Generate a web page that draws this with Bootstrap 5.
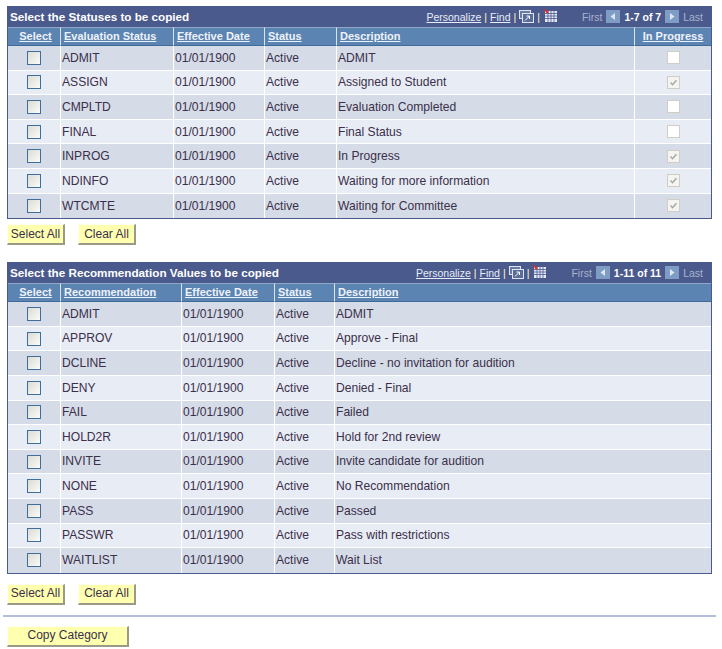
<!DOCTYPE html>
<html lang="en">
<head>
<meta charset="utf-8">
<title>Copy Category</title>
<link href="https://cdn.jsdelivr.net/npm/bootstrap@5.3.0/dist/css/bootstrap.min.css" rel="stylesheet">
<style>
body{font-family:"Liberation Sans",Arial,sans-serif;font-size:12px;color:#3b2f4a;background:#fff;}
.ps-page{padding:6px 6px 0 7px;width:722px;}
.ps-grid{width:705px;border:1px solid #4a5a8c;}
.ps-title{background:#4a5a8c;height:20px;padding:0 8px 0 2px;color:#fff;}
.ps-title b{font-size:11.7px;line-height:20px;}
.ps-tools{font-size:10.5px;color:#fff;line-height:21px;white-space:nowrap;}
.ps-tools a{color:#e8ecf8;}
.ps-tools b{font-size:10.5px;line-height:21px;}
.ps-sep{margin:0 3px;color:#fff6c8;}
.ps-dim{color:#a9b3cf;}
.ps-first{margin-left:25px;}
.ps-table{table-layout:fixed;width:703px;margin:0;border-collapse:separate;border-spacing:0;}
.ps-table th{background:#5b84b2;height:19px;padding:0 0 0 3px;font-size:11px;font-weight:700;border-top:1px solid #8fa9c9;border-left:1px solid #dbe3ef;border-bottom:1px solid #3e6a9c;line-height:15px;white-space:nowrap;}
.ps-table th:first-child{border-left:0;text-align:center;}
.ps-table th a{color:#eef2f9;}
.ps-table td{height:24.6px;padding:0 0 0 1px;font-size:12.1px;color:#3b2f4a;border-left:1px solid #fff;border-bottom:1px solid #fff;vertical-align:middle;background:#d5dce8;white-space:nowrap;}
.ps-table tr:nth-child(even) td{background:#e8ecf5;}
.ps-table tr:last-child td{border-bottom:0;}
.ps-table td:first-child{border-left:0;text-align:center;padding:0;}
.ps-table td.ps-mid,.ps-table th.ps-mid{text-align:center;padding:0;}
.ps-box{appearance:none;-webkit-appearance:none;display:block;margin:0 auto;width:14px;height:14px;border:1.5px solid #3d6e9c;background:linear-gradient(135deg,#dcdcd4,#fbfbf8);}
.ps-box.ps-off{width:13px;height:13px;border:1px solid #cfcdc4;background:#fff;}
.ps-box.ps-off:checked{background:#f4f4f0 url("data:image/svg+xml,%3Csvg xmlns='http://www.w3.org/2000/svg' viewBox='0 0 13 13'%3E%3Cpath d='M3 6.5l2.4 2.6L10 3.8' fill='none' stroke='%23a8a8a0' stroke-width='1.7'/%3E%3C/svg%3E") center/contain no-repeat;}
.ps-actions{gap:13px;margin-top:5px;}
.ps-actions-low{margin-top:10px;}
.ps-btn{background:#ffffb0;color:#3b2f4a;font-family:inherit;font-size:12px;height:21px;width:58px;padding:0;border-radius:0;border:1px solid #fffff0;border-right:2px solid #9a9a88;border-bottom:2px solid #9a9a88;line-height:17px;}
.ps-btn:hover{background:#ffffb0;color:#3b2f4a;border-color:#fffff0 #9a9a88 #9a9a88 #fffff0;}
.ps-wide{width:122px;}
.ps-second{margin-top:17px;}
.ps-rule{border:0;border-top:2px solid #b3bfd8;opacity:1;margin:10px 0 9px -4px;width:713px;}
.ps-ico{vertical-align:-2px;}
.ps-nav{vertical-align:-2px;margin:0 4px;}
.c-sel{width:52px}.c-ev{width:113px}.c-dt1{width:91px}.c-st1{width:72px}.c-ds1{width:298px}.c-ip{width:77px}
.c-rec{width:121px}.c-dt2{width:93px}.c-st2{width:60px}.c-ds2{width:377px}
</style>
</head>
<body>
<div class="ps-page">

<div class="ps-grid">
  <div class="ps-title d-flex justify-content-between">
    <b>Select the Statuses to be copied</b>
    <div class="ps-tools"><a href="#">Personalize</a><span class="ps-sep">|</span><a href="#">Find</a><span class="ps-sep">|</span><svg class="ps-ico" width="15" height="13" viewBox="0 0 15 13"><rect x=".5" y=".5" width="11" height="8" fill="#6a7ca6" stroke="#dfe5f2"/><rect x="3.500" y="3.500" width="11" height="9" fill="#5a6c98" stroke="#dfe5f2"/><path d="M6 10.500l4.500-4.500M7.500 6h3v3" fill="none" stroke="#fff"/></svg><span class="ps-sep">|</span><svg class="ps-ico" width="14" height="15" viewBox="0 0 14 15"><rect x="2" y="3" width="12" height="11" fill="#e4e8fa"/><path d="M2 5.500h12M2 8h12M2 10.500h12M5 3v11M8 3v11M11 3v11" stroke="#4a5a8c" stroke-width=".8"/><path d="M0 0l6 4-2 2z" fill="#e0302a"/></svg><span class="ps-dim ps-first">First</span><svg class="ps-nav" width="14" height="13" viewBox="0 0 14 13"><rect width="14" height="13" fill="#7f9cc4"/><path d="M9 3v7L4.500 6.500z" fill="#dfe6f2"/></svg><b>1-7 of 7</b><svg class="ps-nav" width="14" height="13" viewBox="0 0 14 13"><rect width="14" height="13" fill="#7f9cc4"/><path d="M5 3v7L9.500 6.500z" fill="#dfe6f2"/></svg><span class="ps-dim">Last</span></div>
  </div>
  <table class="ps-table">
    <colgroup><col class="c-sel"><col class="c-ev"><col class="c-dt1"><col class="c-st1"><col class="c-ds1"><col class="c-ip"></colgroup>
    <thead><tr><th><a href="#">Select</a></th><th><a href="#">Evaluation Status</a></th><th><a href="#">Effective Date</a></th><th><a href="#">Status</a></th><th><a href="#">Description</a></th><th class="ps-mid"><a href="#">In Progress</a></th></tr></thead>
    <tbody>
      <tr><td><input class="ps-box" type="checkbox" aria-label="Select ADMIT"></td><td>ADMIT</td><td>01/01/1900</td><td>Active</td><td>ADMIT</td><td class="ps-mid"><input class="ps-box ps-off" type="checkbox" disabled aria-label="In progress"></td></tr>
      <tr><td><input class="ps-box" type="checkbox" aria-label="Select ASSIGN"></td><td>ASSIGN</td><td>01/01/1900</td><td>Active</td><td>Assigned to Student</td><td class="ps-mid"><input class="ps-box ps-off" type="checkbox" checked disabled aria-label="In progress"></td></tr>
      <tr><td><input class="ps-box" type="checkbox" aria-label="Select CMPLTD"></td><td>CMPLTD</td><td>01/01/1900</td><td>Active</td><td>Evaluation Completed</td><td class="ps-mid"><input class="ps-box ps-off" type="checkbox" disabled aria-label="In progress"></td></tr>
      <tr><td><input class="ps-box" type="checkbox" aria-label="Select FINAL"></td><td>FINAL</td><td>01/01/1900</td><td>Active</td><td>Final Status</td><td class="ps-mid"><input class="ps-box ps-off" type="checkbox" disabled aria-label="In progress"></td></tr>
      <tr><td><input class="ps-box" type="checkbox" aria-label="Select INPROG"></td><td>INPROG</td><td>01/01/1900</td><td>Active</td><td>In Progress</td><td class="ps-mid"><input class="ps-box ps-off" type="checkbox" checked disabled aria-label="In progress"></td></tr>
      <tr><td><input class="ps-box" type="checkbox" aria-label="Select NDINFO"></td><td>NDINFO</td><td>01/01/1900</td><td>Active</td><td>Waiting for more information</td><td class="ps-mid"><input class="ps-box ps-off" type="checkbox" checked disabled aria-label="In progress"></td></tr>
      <tr><td><input class="ps-box" type="checkbox" aria-label="Select WTCMTE"></td><td>WTCMTE</td><td>01/01/1900</td><td>Active</td><td>Waiting for Committee</td><td class="ps-mid"><input class="ps-box ps-off" type="checkbox" checked disabled aria-label="In progress"></td></tr>
    </tbody>
  </table>
</div>
<div class="d-flex ps-actions"><button type="button" class="btn ps-btn">Select All</button><button type="button" class="btn ps-btn">Clear All</button></div>

<div class="ps-grid ps-second">
  <div class="ps-title d-flex justify-content-between">
    <b>Select the Recommendation Values to be copied</b>
    <div class="ps-tools"><a href="#">Personalize</a><span class="ps-sep">|</span><a href="#">Find</a><span class="ps-sep">|</span><svg class="ps-ico" width="15" height="13" viewBox="0 0 15 13"><rect x=".5" y=".5" width="11" height="8" fill="#6a7ca6" stroke="#dfe5f2"/><rect x="3.500" y="3.500" width="11" height="9" fill="#5a6c98" stroke="#dfe5f2"/><path d="M6 10.500l4.500-4.500M7.500 6h3v3" fill="none" stroke="#fff"/></svg><span class="ps-sep">|</span><svg class="ps-ico" width="14" height="15" viewBox="0 0 14 15"><rect x="2" y="3" width="12" height="11" fill="#e4e8fa"/><path d="M2 5.500h12M2 8h12M2 10.500h12M5 3v11M8 3v11M11 3v11" stroke="#4a5a8c" stroke-width=".8"/><path d="M0 0l6 4-2 2z" fill="#e0302a"/></svg><span class="ps-dim ps-first">First</span><svg class="ps-nav" width="14" height="13" viewBox="0 0 14 13"><rect width="14" height="13" fill="#7f9cc4"/><path d="M9 3v7L4.500 6.500z" fill="#dfe6f2"/></svg><b>1-11 of 11</b><svg class="ps-nav" width="14" height="13" viewBox="0 0 14 13"><rect width="14" height="13" fill="#7f9cc4"/><path d="M5 3v7L9.500 6.500z" fill="#dfe6f2"/></svg><span class="ps-dim">Last</span></div>
  </div>
  <table class="ps-table">
    <colgroup><col class="c-sel"><col class="c-rec"><col class="c-dt2"><col class="c-st2"><col class="c-ds2"></colgroup>
    <thead><tr><th><a href="#">Select</a></th><th><a href="#">Recommendation</a></th><th><a href="#">Effective Date</a></th><th><a href="#">Status</a></th><th><a href="#">Description</a></th></tr></thead>
    <tbody>
      <tr><td><input class="ps-box" type="checkbox" aria-label="Select ADMIT"></td><td>ADMIT</td><td>01/01/1900</td><td>Active</td><td>ADMIT</td></tr>
      <tr><td><input class="ps-box" type="checkbox" aria-label="Select APPROV"></td><td>APPROV</td><td>01/01/1900</td><td>Active</td><td>Approve - Final</td></tr>
      <tr><td><input class="ps-box" type="checkbox" aria-label="Select DCLINE"></td><td>DCLINE</td><td>01/01/1900</td><td>Active</td><td>Decline - no invitation for audition</td></tr>
      <tr><td><input class="ps-box" type="checkbox" aria-label="Select DENY"></td><td>DENY</td><td>01/01/1900</td><td>Active</td><td>Denied - Final</td></tr>
      <tr><td><input class="ps-box" type="checkbox" aria-label="Select FAIL"></td><td>FAIL</td><td>01/01/1900</td><td>Active</td><td>Failed</td></tr>
      <tr><td><input class="ps-box" type="checkbox" aria-label="Select HOLD2R"></td><td>HOLD2R</td><td>01/01/1900</td><td>Active</td><td>Hold for 2nd review</td></tr>
      <tr><td><input class="ps-box" type="checkbox" aria-label="Select INVITE"></td><td>INVITE</td><td>01/01/1900</td><td>Active</td><td>Invite candidate for audition</td></tr>
      <tr><td><input class="ps-box" type="checkbox" aria-label="Select NONE"></td><td>NONE</td><td>01/01/1900</td><td>Active</td><td>No Recommendation</td></tr>
      <tr><td><input class="ps-box" type="checkbox" aria-label="Select PASS"></td><td>PASS</td><td>01/01/1900</td><td>Active</td><td>Passed</td></tr>
      <tr><td><input class="ps-box" type="checkbox" aria-label="Select PASSWR"></td><td>PASSWR</td><td>01/01/1900</td><td>Active</td><td>Pass with restrictions</td></tr>
      <tr><td><input class="ps-box" type="checkbox" aria-label="Select WAITLIST"></td><td>WAITLIST</td><td>01/01/1900</td><td>Active</td><td>Wait List</td></tr>
    </tbody>
  </table>
</div>
<div class="d-flex ps-actions ps-actions-low"><button type="button" class="btn ps-btn">Select All</button><button type="button" class="btn ps-btn">Clear All</button></div>

<hr class="ps-rule">
<button type="button" class="btn ps-btn ps-wide">Copy Category</button>
</div>
<script src="https://cdn.jsdelivr.net/npm/bootstrap@5.3.0/dist/js/bootstrap.bundle.min.js"></script>
</body>
</html>
